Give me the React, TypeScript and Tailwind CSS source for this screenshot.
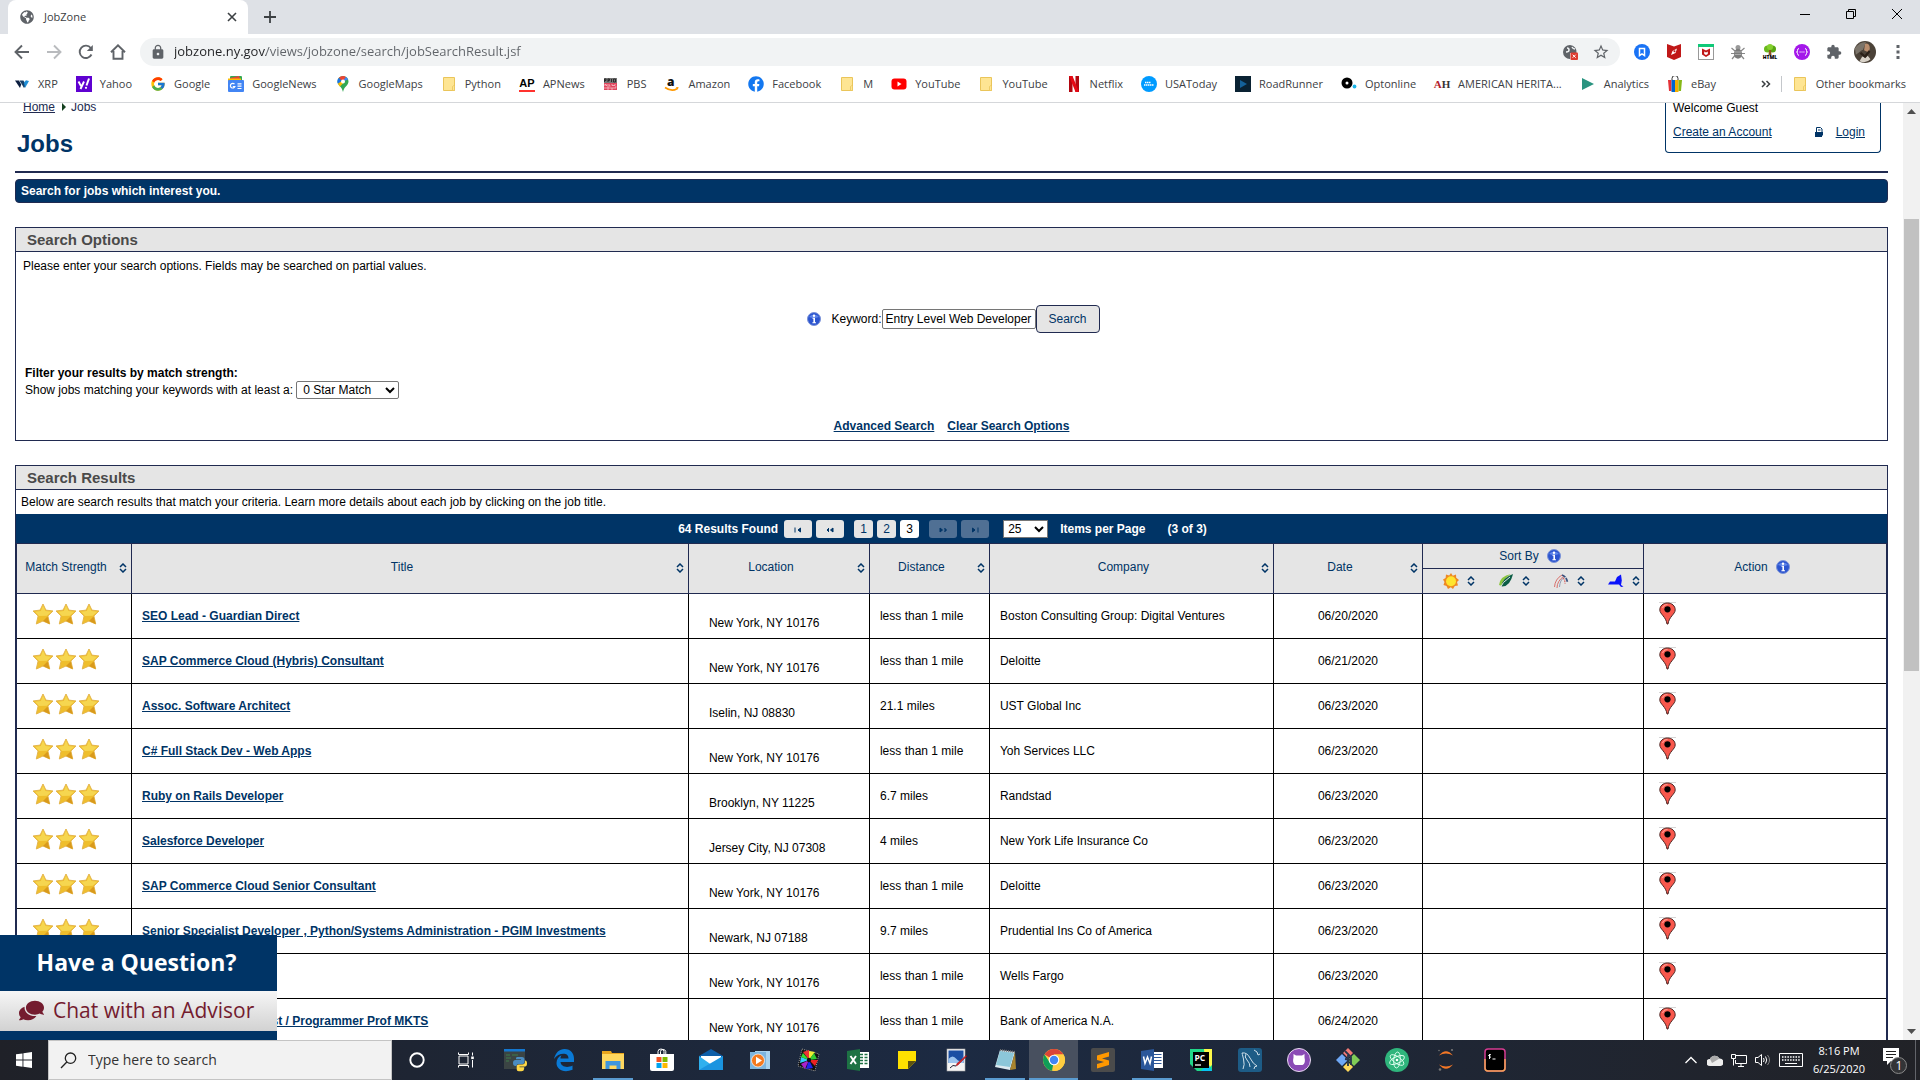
import React from "react";
import { FcGoogle } from "react-icons/fc";
import { FaComments, FaFacebook, FaGlobeAmericas } from "react-icons/fa";
import { MdExtension, MdLock, MdStarBorder } from "react-icons/md";

/* ---------- bookmark icons ---------- */
const Svg = ({ children, box = "0 0 16 16", className = "size-4" }: { children: React.ReactNode; box?: string; className?: string }) => (
  <svg viewBox={box} className={className + " shrink-0"} aria-hidden="true">
    {children}
  </svg>
);
const Folder = () => (
  <Svg>
    <path d="M2.500 1.500h11v13h-11z" fill="#fee593" stroke="#eac55a" />
    <path d="M11.500 14.500v-4q1-1.500 2 0v4z" fill="#fee593" stroke="#eac55a" strokeWidth=".8" />
  </Svg>
);
const Xrp = () => (
  <Svg>
    <path d="M1 4.500h4l2.200 4L6 12z" fill="#0b1d3f" />
    <path d="M5.500 4.500h4L12 9l-2 3z" fill="#16406b" />
    <path d="M10 6.500l2-2.200L15 5l-4 7z" fill="#1f8fd6" />
  </Svg>
);
const Yahoo = () => (
  <Svg>
    <rect width="16" height="16" fill="#5f01d1" />
    <path d="M2.500 5.500l2.500 4.500M8 5.500L4.500 13" stroke="#fff" strokeWidth="1.900" />
    <path d="M10.500 9.500L13 2.500" stroke="#fff" strokeWidth="2" />
    <circle cx="10" cy="11.800" r="1.100" fill="#fff" />
  </Svg>
);
const News = () => (
  <Svg>
    <rect x="2" y="0" width="12" height="6" rx="1" fill="#34a853" />
    <path d="M2 2l9-2 2 5H3z" fill="#ea4335" />
    <path d="M0 2.500h13V6H0z" fill="#fbbc04" />
    <rect y="4" width="16" height="12" rx="1" fill="#4285f4" />
    <path d="M6.500 8.200a2.300 2.300 0 1 0 .4 2.300H4.800M9.500 7.800h4M9.500 10.200h4M9.500 12.500h4" stroke="#fff" strokeWidth="1.200" fill="none" />
  </Svg>
);
const Maps = () => (
  <Svg>
    <path d="M8 0a5.500 5.500 0 0 0-5.500 5.500C2.500 9.500 7 10.500 8 16c1-5.500 5.500-6.500 5.500-10.500A5.500 5.500 0 0 0 8 0z" fill="#34a853" />
    <path d="M8 0a5.500 5.500 0 0 0-4.300 2L8 5.500 11 1a5.500 5.500 0 0 0-3-1z" fill="#ea4335" />
    <path d="M3.700 2a5.500 5.500 0 0 0-.8 5.800L8 5.500z" fill="#1a73e8" />
    <path d="M2.900 7.800L4.800 10.500 10 5.500 8 4z" fill="#fbbc04" />
    <path d="M11 1L7 6l6-2.500A5.500 5.500 0 0 0 11 1z" fill="#4285f4" />
    <circle cx="8" cy="5.500" r="2" fill="#fff" />
  </Svg>
);
const Ap = () => (
  <span className="flex size-4 shrink-0 flex-col items-center justify-end border-b-2 border-[#ff322e] font-['Liberation_Sans'] text-[11px] leading-[13px] font-bold text-black">AP</span>
);
const Pbs = () => (
  <Svg>
    <rect x="1" y="2" width="13" height="5" fill="#777" />
    <rect x="1" y="7" width="13" height="7" fill="#e0445c" />
    <path d="M1.500 6V3h1.500v1.500H1.500M5 6V3h1.500v1.500H5M8.500 3v3M10.500 6V3h2v3z" stroke="#222" strokeWidth=".9" fill="none" />
    <path d="M2 10V8l2 2V8M6 8v2h1.500M9 8v1.500h3V8M2 13v-2M4 11h2v2H4zM8 11v2h2v-2M12 13v-2h1.500" stroke="#f9c5cc" strokeWidth=".8" fill="none" />
  </Svg>
);
const Amazon = () => (
  <Svg>
    <text x="3" y="10" fontFamily="Open Sans" fontWeight="800" fontSize="12" fill="#111">a</text>
    <path d="M1 11.500q6.500 4.500 12 1.200" stroke="#f90" strokeWidth="1.600" fill="none" />
    <path d="M11.800 11.300l2.800-.2-.8 2.700z" fill="#f90" />
  </Svg>
);
const YouTube = () => (
  <Svg>
    <rect x=".5" y="2.500" width="15" height="11" rx="3" fill="#f00" />
    <path d="M6.500 5.500v5l4-2.500z" fill="#fff" />
  </Svg>
);
const Netflix = () => (
  <Svg>
    <path d="M3 0h3.500v16H3zM9.500 0H13v16H9.500z" fill="#b1060f" />
    <path d="M3 0h3.500L13 16H9.500z" fill="#e50914" />
  </Svg>
);
const UsaToday = () => (
  <Svg>
    <circle cx="8" cy="8" r="8" fill="#009bff" />
    <path d="M4 6.500h6M3 9h10" stroke="#fff" strokeWidth="1.500" strokeDasharray="1.500 .5" />
  </Svg>
);
const RoadRunner = () => (
  <Svg>
    <rect width="16" height="16" fill="#0a2233" />
    <path d="M5 4l7 4-7 4z" fill="#14619a" />
  </Svg>
);
const Optonline = () => (
  <Svg>
    <circle cx="6" cy="7" r="3.500" fill="none" stroke="#000" strokeWidth="4" />
    <circle cx="13.500" cy="10.500" r="1.900" fill="#1bb4e8" />
  </Svg>
);
const Heritage = () => (
  <span className="flex w-4 shrink-0 justify-center font-['Liberation_Serif'] text-[11px] font-bold text-[#333]">
    <span className="text-[#b3202b]">A</span>H
  </span>
);
const Analytics = () => (
  <Svg>
    <path d="M2 2l12 6-12 6z" fill="#2a9480" />
  </Svg>
);
const Ebay = () => (
  <Svg>
    <path d="M5 4V2.500a3 3 0 0 1 6 0V4" fill="none" stroke="#333" />
    <path d="M1 4h3.500v11H2z" fill="#e53238" />
    <path d="M4.500 4H8v12H4.500z" fill="#0064d2" />
    <path d="M8 4h3.500v12H8z" fill="#f5af02" />
    <path d="M11.500 4H15l-1 11h-2.500z" fill="#86b817" />
  </Svg>
);

const bookmarks: { label: string; icon: React.ReactNode }[] = [
  { label: "XRP", icon: <Xrp /> },
  { label: "Yahoo", icon: <Yahoo /> },
  { label: "Google", icon: <FcGoogle className="size-4 shrink-0" /> },
  { label: "GoogleNews", icon: <News /> },
  { label: "GoogleMaps", icon: <Maps /> },
  { label: "Python", icon: <Folder /> },
  { label: "APNews", icon: <Ap /> },
  { label: "PBS", icon: <Pbs /> },
  { label: "Amazon", icon: <Amazon /> },
  { label: "Facebook", icon: <FaFacebook className="size-4 shrink-0 text-[#1478f0]" /> },
  { label: "M", icon: <Folder /> },
  { label: "YouTube", icon: <YouTube /> },
  { label: "YouTube", icon: <Folder /> },
  { label: "Netflix", icon: <Netflix /> },
  { label: "USAToday", icon: <UsaToday /> },
  { label: "RoadRunner", icon: <RoadRunner /> },
  { label: "Optonline", icon: <Optonline /> },
  { label: "AMERICAN HERITA...", icon: <Heritage /> },
  { label: "Analytics", icon: <Analytics /> },
  { label: "eBay", icon: <Ebay /> },
];

/* ---------- toolbar extensions ---------- */
const extensions: { label: string; icon: React.ReactNode }[] = [
  {
    label: "Bookmark manager",
    icon: (
      <Svg>
        <circle cx="8" cy="8" r="8" fill="#1a73f5" />
        <path d="M5.500 4.500h5v7L8 9.800l-2.500 1.700z" fill="none" stroke="#fff" strokeWidth="1.500" />
      </Svg>
    ),
  },
  {
    label: "Web boost",
    icon: (
      <Svg>
        <path d="M1 0l7 2.500L15 0v13l-7 3-7-3z" fill="#c01818" />
        <path d="M5 11l1.500-4L11 4.500 9.500 9z" fill="#fff" />
        <circle cx="8.500" cy="7.200" r="1" fill="#c01818" />
      </Svg>
    ),
  },
  {
    label: "Web advisor",
    icon: (
      <Svg>
        <rect x=".5" y=".5" width="15" height="15" fill="#fff" stroke="#999" />
        <path d="M0 0h16v3H0z" fill="#0fc978" />
        <path d="M4 4.500l4 2 4-2v6L8 13l-4-2.500z" fill="#c01818" />
        <path d="M6.200 7.500L8 8.500l1.800-1v2.500L8 11l-1.800-1z" fill="#fff" />
      </Svg>
    ),
  },
  {
    label: "Bug reporter",
    icon: (
      <Svg>
        <path d="M1.500 4l3.500 3M14.500 4L11 7M1 9.500h4M15 9.500h-4M2 15l3-3.500M14 15l-3-3.500" stroke="#888" fill="none" strokeWidth="1.200" />
        <circle cx="8" cy="3.500" r="2.500" fill="#999" />
        <ellipse cx="8" cy="9.800" rx="4" ry="5" fill="#7c7c7c" />
        <path d="M5 8h6M5 10.500h6" stroke="#bbb" strokeWidth=".8" />
      </Svg>
    ),
  },
  {
    label: "HTML tree",
    icon: (
      <Svg>
        <circle cx="5.500" cy="5" r="3.500" fill="#6ab81c" />
        <circle cx="10.500" cy="5" r="3.500" fill="#57a512" />
        <circle cx="8" cy="3" r="3" fill="#84d02e" />
        <path d="M7 6h2l.5 5h-3z" fill="#8a5522" />
        <text x="8" y="15" textAnchor="middle" fontFamily="Open Sans" fontWeight="800" fontSize="5" fill="#000">HTML</text>
      </Svg>
    ),
  },
  {
    label: "Formatter",
    icon: (
      <Svg>
        <circle cx="8" cy="8" r="8" fill="#a417ea" />
        <path d="M5 4.500q-1.500 0-1.500 2T2.500 8q1 0 1 1.500t1.500 2M11 4.500q1.500 0 1.500 2T13.500 8q-1 0-1 1.500t-1.500 2" stroke="#fff" fill="none" />
        <path d="M5.500 8h5" stroke="#fff" strokeDasharray="1.200 .7" strokeWidth="1.200" />
      </Svg>
    ),
  },
  { label: "Extensions", icon: <MdExtension className="size-4 shrink-0 text-[#5f6368]" /> },
];

/* ---------- page icons ---------- */
const Info = () => (
  <Svg box="0 0 14 14" className="size-3.5">
    <circle cx="7" cy="7" r="6.500" fill="#2c55cf" stroke="#7b93d8" />
    <path d="M2 5a5.500 4 0 0 1 10 0q-5 2-10 0z" fill="#5f86ea" />
    <circle cx="7" cy="3.700" r="1.200" fill="#fff" />
    <path d="M5.500 5.800h2.500v4.500h1v1H5.400v-1h1V6.800h-.9z" fill="#fff" />
  </Svg>
);
const SortArrows = () => (
  <Svg box="0 0 8 10" className="h-2.5 w-2">
    <path d="M1 4l3-3 3 3M1 6l3 3 3-3" fill="none" stroke="#003466" strokeWidth="1.500" />
  </Svg>
);
const Star = () => (
  <Svg box="0 0 22 22" className="size-[22px]">
    <path d="M11 1l2.900 6.100 7.100.9-5.100 5 1.800 8L11 18l-6.700 3 1.800-8L1 8l7.100-.9z" fill="#efbe2c" stroke="#e5b64d" strokeLinejoin="round" />
    <path d="M11 2.500l2.500 5.600 6 .6-4.700 4L7 13 3 8.700l5.800-.6z" fill="#f6d650" />
    <path d="M11 18l4.500-4.500 2.200 7.500z" fill="#d99a1c" />
  </Svg>
);
const Pin = () => (
  <Svg box="0 0 17 23" className="h-[23px] w-[17px]">
    <path d="M0 .5h17" stroke="#ccc" strokeWidth=".8" />
    <path d="M8.500 1C4 1 .800 4 .800 7.800c0 4.500 6.200 6.700 7.200 14.200h1c1-7.500 7.200-9.700 7.200-14.200C16.200 4 13 1 8.500 1z" fill="#f8574c" stroke="#4a2320" />
    <path d="M3.500 6q1.500-3.500 5-3.500" stroke="#ff9d94" strokeWidth="1.200" fill="none" />
    <circle cx="8.500" cy="7.300" r="3.100" fill="#000" />
  </Svg>
);
const Sun = () => (
  <Svg>
    <path d="M8 0l1.800 2.700L13 1.500l.2 3.300L16 7l-2 2 1 3.500-3.200.5L10 16l-2.200-1.800L5 16l-1.500-3L.500 12 1.500 9 0 6.500 2.600 5 3 1.500l3.200 1z" fill="#ee8a22" />
    <circle cx="8" cy="8.200" r="5" fill="#ffe52e" />
  </Svg>
);
const Leaf = () => (
  <Svg>
    <path d="M1 12Q2 3 13 1 6 5 4 13z" fill="#8cc63f" />
    <path d="M15 1Q4 5 3.500 13.500 12 14 15 1z" fill="#0b5c45" />
    <path d="M1.500 16Q4 9 12 4" stroke="#e5e5e5" fill="none" />
  </Svg>
);
const Wings = () => (
  <Svg>
    <path d="M1.500 14Q2 6 9 2M4 15Q4 8 11 3" stroke="#d8706c" fill="none" />
    <path d="M6.500 14Q7 7 11 4.500" stroke="#8e9cb4" fill="none" />
    <path d="M9 2q4 1 5.500 7" stroke="#35517f" fill="none" strokeWidth="1.700" strokeDasharray="4 1" />
    <path d="M10 5q2 1 2 6" stroke="#d8605c" fill="none" strokeWidth="1.200" strokeDasharray="2 1" />
  </Svg>
);
const NewYork = () => (
  <Svg>
    <path d="M0 11.500L2 8.500h5L9 4l4-2.500.8 6L13 12l2.500 1.500-2.500.5-2-2.500z" fill="#0a12fb" />
  </Svg>
);

/* ---------- results ---------- */
type Job = { title: string; location: string; distance: string; company: string; date: string };
const jobs: Job[] = [
  { title: "SEO Lead - Guardian Direct", location: "New York, NY 10176", distance: "less than 1 mile", company: "Boston Consulting Group: Digital Ventures", date: "06/20/2020" },
  { title: "SAP Commerce Cloud (Hybris) Consultant", location: "New York, NY 10176", distance: "less than 1 mile", company: "Deloitte", date: "06/21/2020" },
  { title: "Assoc. Software Architect", location: "Iselin, NJ 08830", distance: "21.1 miles", company: "UST Global Inc", date: "06/23/2020" },
  { title: "C# Full Stack Dev - Web Apps", location: "New York, NY 10176", distance: "less than 1 mile", company: "Yoh Services LLC", date: "06/23/2020" },
  { title: "Ruby on Rails Developer", location: "Brooklyn, NY 11225", distance: "6.7 miles", company: "Randstad", date: "06/23/2020" },
  { title: "Salesforce Developer", location: "Jersey City, NJ 07308", distance: "4 miles", company: "New York Life Insurance Co", date: "06/23/2020" },
  { title: "SAP Commerce Cloud Senior Consultant", location: "New York, NY 10176", distance: "less than 1 mile", company: "Deloitte", date: "06/23/2020" },
  { title: "Senior Specialist Developer , Python/Systems Administration - PGIM Investments", location: "Newark, NJ 07188", distance: "9.7 miles", company: "Prudential Ins Co of America", date: "06/23/2020" },
  { title: "Web Developer", location: "New York, NY 10176", distance: "less than 1 mile", company: "Wells Fargo", date: "06/23/2020" },
  { title: "Quantitative Fin. Analyst / Programmer Prof MKTS", location: "New York, NY 10176", distance: "less than 1 mile", company: "Bank of America N.A.", date: "06/24/2020" },
];

const SortHeader = ({ children }: { children: React.ReactNode }) => (
  <th rowSpan={2} scope="col" className="border-r border-b border-[#202a50] bg-[#e5e5e5] p-0 font-normal text-[#003466]">
    <div className="flex items-center pr-1 pb-1">
      <span className="grow text-center">{children}</span>
      <button aria-label={"Sort by " + children} className="pt-0.5 pl-1"><SortArrows /></button>
    </div>
  </th>
);
const SortIcon = ({ label, children }: { label: string; children: React.ReactNode }) => (
  <th scope="col" className="h-[25px] border-b border-[#202a50] bg-[#e5e5e5] p-0 last:border-r">
    <div className="flex items-center justify-end gap-2 pr-[3px]">
      {children}
      <button aria-label={"Sort by " + label}><SortArrows /></button>
    </div>
  </th>
);
const NavButton = ({ label, d, disabled }: { label: string; d: string; disabled?: boolean }) => (
  <button
    aria-label={label}
    disabled={disabled}
    className={
      disabled
        ? "flex h-[18px] w-7 items-center justify-center rounded-[3px] bg-[#507094]"
        : "flex h-[18px] w-7 items-center justify-center rounded-[3px] bg-[#e5e5e5]"
    }
  >
    <Svg box="0 0 12 8" className="mt-0.5 h-2 w-3">
      <path d={d} fill="#003466" stroke="#003466" />
    </Svg>
  </button>
);

/* ---------- task bar icons ---------- */
const T = ({ children }: { children: React.ReactNode }) => <Svg box="0 0 24 24" className="size-6">{children}</Svg>;
const apps: { label: string; icon: React.ReactNode; state?: "open" | "active" }[] = [
  { label: "Cortana", icon: <T><circle cx="12" cy="12" r="6.700" fill="none" stroke="#fff" strokeWidth="1.900" /></T> },
  { label: "Task View", icon: <T><path d="M5 8h9v8H5zM4.500 4.500v2h10v-2M4.500 19.500v-2h10v2M18.500 4.500v3M18.500 12v7.500" fill="none" stroke="#fff" /><rect x="17.200" y="8.500" width="2.600" height="2.600" fill="#fff" /></T> },
  { label: "Python console", icon: <T><rect x="1" y="1" width="21" height="20" fill="#3b4444" /><path d="M1 1h21v2.500H1z" fill="#1477d0" /><path d="M3 7h4M9 7h6M3 10h5M3 13h3" stroke="#3f7c4a" /><path d="M14 9h5q2.500 0 2.500 2.500v2.500q0 2-2 2h-4q-2 0-2 2h-1q-2.500 0-2.500-3t2.500-3h5.500v-.8H13V10.500Q13 9 14 9z" fill="#4a8cc2" /><path d="M22 12.500q2 0 2 3t-2 3h-5.500v.7H21v2q0 2-2.500 2h-2.800q-2 0-2-2v-3q0-1.800 2-1.800h3.800q2 0 2.500-2z" fill="#ffd847" /></T> },
  { label: "Edge", icon: <T><path d="M2 11C3.500 4.500 7.500 1 12.500 1 19 1 22 6 22 10.500V14H8.500c.3 4.500 6.500 6.500 12 3.500v4.300C11 25.500 4.500 21 4.500 15c0-3.700 2-6.300 5-7.800C8.700 8.500 8.500 9.500 8.500 10.500h8C16.500 3.500 6 5 2 11z" fill="#0a7ad6" /></T> },
  { label: "File Explorer", state: "open", icon: <T><path d="M1 3h9l1 2h12v16H1z" fill="#e9a51d" /><path d="M1 6h22v15H1z" fill="#ffd75e" /><path d="M4.500 21v-8h15v8h-4v-3.500h-7V21z" fill="#3f96dd" /></T> },
  { label: "Store", icon: <T><path d="M8 6V3.500q0-2.500 3-2.500t3 2.500V6M10.500 6V3.500q0-2 2.500-2t2.800 2V6" fill="none" stroke="#fff" /><path d="M0 6h24v15q0 2-2 2H2q-2 0-2-2z" fill="#fff" /><path d="M6.500 9h5v5h-5z" fill="#f25022" /><path d="M12.500 9h5v5h-5z" fill="#7fba00" /><path d="M6.500 15h5v5h-5z" fill="#00a4ef" /><path d="M12.500 15h5v5h-5z" fill="#ffb900" /></T> },
  { label: "Mail", icon: <T><path d="M0 8l12-7 12 7v14H0z" fill="#0d5ea8" /><path d="M2 8h20v8H2z" fill="#fff" /><path d="M0 8l12 8.500L24 8v14H0z" fill="#2fb0ee" /><path d="M0 22L24 8v14z" fill="#1a94e0" /></T> },
  { label: "Media Player", icon: <T><rect x="7" y="3" width="15" height="18" fill="#a9d3ee" /><rect x="2" y="4" width="16" height="17" fill="#7cb5de" /><circle cx="10" cy="12.500" r="6.500" fill="#f47a1f" stroke="#fff" strokeWidth=".7" /><path d="M8 8.800v7.500l6-3.700z" fill="#fff" /></T> },
  { label: "Picasa", icon: <T><path d="M5 1l17 5-4 17L1 18z" fill="#111" stroke="#999" strokeDasharray="1 1" /><path d="M12 12L6 4l6-2z" fill="#e33" /><path d="M12 12V3l6 1z" fill="#ee3" /><path d="M12 12l5-7 3 6z" fill="#3c3" /><path d="M12 12l9 0-3 6z" fill="#e22" /><path d="M12 12l4 8-7 1z" fill="#22e" /><path d="M12 12l-4 9-4-5z" fill="#a2c" /><path d="M12 12L3 15l1-6z" fill="#3cf" /><path d="M12 12L4 9l2-4z" fill="#3d3" /><circle cx="12" cy="12" r="2.200" fill="#111" /></T> },
  { label: "Excel", icon: <T><rect x="12" y="4" width="11" height="16" fill="#fff" /><path d="M14 6.500h3M18.500 6.500h3M14 9.500h3M18.500 9.500h3M14 12.500h3M18.500 12.500h3M14 15.500h3M18.500 15.500h3" stroke="#1f7145" strokeWidth="1.700" /><path d="M1 3l13-2v22L1 21z" fill="#1d7244" /><path d="M4.500 8l5.500 8M10 8l-5.500 8" stroke="#fff" strokeWidth="1.900" /></T> },
  { label: "Sticky Notes", icon: <T><path d="M3 3h18v10l-8 8H3z" fill="#ffe100" /><path d="M13 21v-8h8z" fill="#5d5310" /></T> },
  { label: "Journal", icon: <T><rect x="3" y="1" width="18" height="22" fill="#f4f4f4" stroke="#aaa" strokeWidth=".6" /><path d="M4.500 2.500h15V15h-15z" fill="#1b4fa3" /><path d="M4.500 11q4-5 8 0t7-3v7h-15z" fill="#9bc4ee" /><path d="M23 8l-9 9-2 1 1-2.500 9-8z" fill="#d22" stroke="#701" strokeWidth=".4" /><path d="M6 20q3-4 6-2" stroke="#223" fill="none" /></T> },
  { label: "Notepad", state: "open", icon: <T><path d="M7 2l15 2-5 18L2 19z" fill="#dceaf0" /><path d="M7 3l14 2-4 14-14-2z" fill="#8cc7d9" /><path d="M22 4l1 17-6 1z" fill="#a8842e" /><path d="M7 2l15 2" stroke="#777" strokeWidth="2" strokeDasharray="1 1" /></T> },
  { label: "Chrome", state: "active", icon: <T><circle cx="12" cy="12" r="11" fill="#fc4" /><path d="M12 12L2.500 6.500A11 11 0 0 1 21.500 6.500H12z" fill="#db4437" /><path d="M12 12l-2 10.800A11 11 0 0 1 2.500 6.500L7.500 14z" fill="#0f9d58" /><path d="M16 14l-4.700 9A11 11 0 0 0 21.500 6.500H12z" fill="#ffcd40" /><circle cx="12" cy="12" r="5.300" fill="#fff" /><circle cx="12" cy="12" r="4.200" fill="#4285f4" /></T> },
  { label: "Sublime Text", icon: <T><rect width="24" height="24" rx="2" fill="#4b4b4b" /><path d="M6 7.500l12-3.500v4.500l-7 2 7 2V17L6 20.500V16l7-2-7-2z" fill="#ff9800" /></T> },
  { label: "Word", state: "open", icon: <T><rect x="12" y="4" width="11" height="16" fill="#fff" /><path d="M14 6.500h7.500M14 9.500h7.500M14 12.500h7.500M14 15.500h7.500" stroke="#2b579a" strokeWidth="1.200" /><path d="M1 3l13-2v22L1 21z" fill="#2b579a" /><path d="M3.500 8.500l1.500 7L7.500 9l2.500 6.500 1.500-7" stroke="#fff" strokeWidth="1.500" fill="none" /></T> },
  { label: "PyCharm", icon: <T><path d="M1 1h14l8 6v16H8l-7-7z" fill="#21d789" /><path d="M15 1h8v16l-6 6z" fill="#fcf84a" /><path d="M19 15l4 8H12z" fill="#07c3f2" /><rect x="4" y="4" width="16" height="16" fill="#000" /><text x="5.500" y="13" fontFamily="Open Sans" fontWeight="700" fontSize="8.500" fill="#fff">PC</text><path d="M6 17h6" stroke="#fff" strokeWidth="1.300" /></T> },
  { label: "MySQL Workbench", icon: <T><rect width="24" height="24" rx="3" fill="#1d5c86" /><path d="M5 21Q7 17 5.500 11T4 5q5-1 8 5t7 8q-3 0-3 3M8 6q-2 3 1 6t3 7" stroke="#cfe0ea" fill="none" /><path d="M16 2l3 2 1 3 2-1" stroke="#cfe0ea" fill="none" /></T> },
  { label: "GitHub Desktop", icon: <T><circle cx="12" cy="12" r="11.500" fill="#8a4bb5" stroke="#e8dcf0" /><path d="M6.500 6l2.500 1.500h6L17.500 6v3.500q1.500 6-2 7.500h-7q-3.500-1.500-2-7.500z" fill="#fff" /></T> },
  { label: "Git", icon: <T><path d="M12 0l5 5-5 5-5-5z" fill="#f27a75" /><path d="M6 6l6 6-6 6-6-6z" fill="#6fa8f5" /><path d="M18 6l6 6-6 6-6-6z" fill="#80cc56" /><path d="M12 14l5 5-5 5-5-5z" fill="#ffd95a" /><path d="M9 3l6 6v8M12 7v11M9 11l6 1" stroke="#26364c" strokeWidth="1.800" fill="none" /></T> },
  { label: "Atom", icon: <T><circle cx="12" cy="12" r="12" fill="#2fb57c" /><g fill="none" stroke="#e0fff0" strokeWidth=".9"><ellipse cx="12" cy="12" rx="8" ry="3.300" transform="rotate(35 12 12)" /><ellipse cx="12" cy="12" rx="8" ry="3.300" transform="rotate(95 12 12)" /><ellipse cx="12" cy="12" rx="8" ry="3.300" transform="rotate(155 12 12)" /></g><circle cx="12" cy="12" r="1.300" fill="#fff" /></T> },
  { label: "Jupyter", icon: <T><path d="M5 7.500Q12-1 19 7.500 12 3.500 5 7.500zM5 16.500Q12 25 19 16.500 12 20.500 5 16.500z" fill="#f37726" /><circle cx="18" cy="2" r="1.100" fill="#777" /><circle cx="5" cy="2.500" r=".8" fill="#777" /><circle cx="6" cy="21.500" r="1.300" fill="#777" /></T> },
  { label: "Terminal", icon: <T><rect x="2" y="1" width="20" height="22" rx="3" fill="#000" stroke="#d63c92" strokeWidth="1.500" /><path d="M2 11v9q0 3 3 3h14q3 0 3-3v-9" fill="none" stroke="#f0a452" strokeWidth="1.500" /><path d="M6.500 6v5M8 6.500l-2.500 1 2.500 2M9.500 11h3" stroke="#fff" fill="none" /></T> },
];

export default function App() {
  return (
    <div className="flex h-screen flex-col overflow-hidden bg-white font-['Liberation_Sans',Arial,sans-serif] text-xs text-black">
      {/* browser chrome */}
      <header className="shrink-0 border-b border-[#d5d7da] bg-white font-['Open_Sans',sans-serif] text-[11px] text-[#3c4043]">
        <div className="flex h-[34px] bg-[#dee1e6] pl-2">
          <div className="flex w-60 items-center rounded-t-lg bg-white pr-2.5 pl-3">
            <FaGlobeAmericas className="size-3.5 text-[#5f6368]" />
            <span className="ml-2.5 grow">JobZone</span>
            <button aria-label="Close tab">
              <Svg className="size-3" box="0 0 12 12"><path d="M2 2l8 8M10 2l-8 8" stroke="#3c4043" strokeWidth="1.600" /></Svg>
            </button>
          </div>
          <button aria-label="New tab" className="ml-[15px]">
            <Svg className="size-3.5" box="0 0 14 14"><path d="M7 1v12M1 7h12" stroke="#3c4043" strokeWidth="1.800" /></Svg>
          </button>
          <div className="ml-auto flex h-7 items-center text-black">
            <button aria-label="Minimize" className="flex w-[46px] justify-center"><Svg className="size-2.5" box="0 0 10 10"><path d="M0 5.500h10" stroke="#000" /></Svg></button>
            <button aria-label="Restore" className="flex w-[46px] justify-center"><Svg className="size-2.5" box="0 0 10 10"><path d="M.5 2.500h7v7h-7zM2.500 2.500v-2h7v7h-2" fill="none" stroke="#000" /></Svg></button>
            <button aria-label="Close" className="flex w-[46px] justify-center"><Svg className="size-2.5" box="0 0 10 10"><path d="M0 0l10 10M10 0L0 10" stroke="#000" /></Svg></button>
          </div>
        </div>
        <div className="flex h-8 items-center pt-1 pr-3.5 pl-3.5">
          <div className="flex w-[126px] items-center gap-4">
            <button aria-label="Back"><Svg><path d="M15 8H2M8 1.500L1.500 8 8 14.500" fill="none" stroke="#5f6368" strokeWidth="1.900" /></Svg></button>
            <button aria-label="Forward"><Svg><path d="M1 8h13M8 1.500L14.500 8 8 14.500" fill="none" stroke="#b9bbbe" strokeWidth="1.900" /></Svg></button>
            <button aria-label="Reload"><Svg><path d="M13.500 10.500A6.200 6.200 0 1 1 12.800 4" fill="none" stroke="#5f6368" strokeWidth="1.900" /><path d="M14.800 1v6H8.800z" fill="#5f6368" /></Svg></button>
            <button aria-label="Home"><Svg><path d="M1 8.200L8 1.300l7 6.900M3.500 7v7.800h9V7" fill="none" stroke="#5f6368" strokeWidth="1.900" /></Svg></button>
          </div>
          <div className="flex h-7 grow items-center rounded-full bg-[#f1f3f4] px-2.5">
            <MdLock className="size-4 text-[#5f6368]" />
            <input
              aria-label="Address"
              className="ml-2 grow bg-[linear-gradient(to_right,#202124_92px,#5f6368_92px)] bg-clip-text text-[13px] text-transparent"
              defaultValue="jobzone.ny.gov/views/jobzone/search/jobSearchResult.jsf"
            />
            <Svg>
              <path d="M8 1a7 7 0 1 0 0 14V9h6.500A7 7 0 0 0 8 1z" fill="#5f6368" /><path d="M5 4q2 0 2 2t-3 2M10 3q1 2 3 2" stroke="#f1f3f4" fill="none" strokeWidth="1.500" />
              <rect x="8.500" y="8.500" width="7.500" height="7.500" rx="1" fill="#dd3b30" /><path d="M10.700 10.700l3 3m0-3l-3 3" stroke="#fff" />
            </Svg>
            <button aria-label="Bookmark this page" className="ml-3.5"><MdStarBorder className="size-[18px] text-[#5f6368]" /></button>
          </div>
          <div className="ml-3.5 flex items-center gap-4">
            {extensions.map((e) => (
              <button key={e.label} aria-label={e.label}>{e.icon}</button>
            ))}
          </div>
          <button aria-label="Profile" className="ml-3">
            <Svg box="0 0 24 24" className="size-[22px]">
              <circle cx="12" cy="12" r="12" fill="#4b4238" />
              <path d="M1 8q5-7 12-7l-3 8-8 6z" fill="#7b746a" />
              <path d="M12 3q4-1 5 3t-2 6l-4-2z" fill="#b98d6d" />
              <path d="M6 22l3-5 4 1 2-2 3 4q-5 5-12 2z" fill="#d8d2c8" />
              <path d="M7 13l5 4 5-6" stroke="#2a2018" strokeWidth="2.500" fill="none" />
            </Svg>
          </button>
          <button aria-label="Menu" className="ml-3.5"><Svg><path d="M8 1v3M8 6.500v3M8 12v3" stroke="#5f6368" strokeWidth="3" /></Svg></button>
        </div>
        <nav aria-label="Bookmarks" className="flex h-9 items-center overflow-hidden pr-3.5 pl-3.5">
          <div className="flex items-center gap-[18px]">
            {bookmarks.map((b, i) => (
              <a key={i} href="#" className="flex shrink-0 items-center gap-2 whitespace-nowrap">{b.icon}{b.label}</a>
            ))}
          </div>
          <button aria-label="More bookmarks" className="ml-auto"><Svg className="size-2.5" box="0 0 10 10"><path d="M1 2l3 3-3 3M5.500 2l3 3-3 3" fill="none" stroke="#3c4043" strokeWidth="1.500" /></Svg></button>
          <span className="mx-2.5 h-4 w-px bg-[#c4c7cb]" />
          <a href="#" className="flex shrink-0 items-center gap-2 whitespace-nowrap"><Folder />Other bookmarks</a>
        </nav>
      </header>

      {/* page */}
      <div className="relative flex min-h-0 grow">
        <main className="min-w-0 grow overflow-hidden px-[15px]">
          <div className="flex h-[68px] justify-between">
            <div>
              <nav aria-label="Breadcrumb" className="-mt-1 flex h-4 items-center pl-2 text-[#202a50]">
                <a href="#" className="underline">Home</a>
                <Svg className="ml-1.5 mr-1 h-2 w-1.5" box="0 0 6 8"><path d="M1 0l4 4-4 4z" fill="#14401f" /></Svg>
                <span>Jobs</span>
              </nav>
              <h1 className="mt-[13px] pl-0.5 text-2xl leading-8 font-bold text-[#003466]">Jobs</h1>
            </div>
            <div className="mr-[7px] h-[50px] w-[216px] rounded-b border border-t-0 border-[#003466] px-[7px]">
              <p className="-mt-1 leading-[18px]">Welcome Guest</p>
              <div className="flex h-[30px] items-center text-[#003466]">
                <a href="#" className="grow underline">Create an Account</a>
                <Svg className="mr-3 h-2.5 w-2.5" box="0 0 10 10"><path d="M2.500 5V.500h4L8 2v3" fill="#fff" stroke="#003466" /><path d="M4 3h2.500" stroke="#003466" /><path d="M1 5h8v3.500H8V10H1z" fill="#003466" /></Svg>
                <a href="#" className="mr-2 underline">Login</a>
              </div>
            </div>
          </div>
          <div className="h-0.5 bg-[#202a50]" />
          <p className="mt-1.5 rounded border border-[#202a50] bg-[#003466] px-[5px] leading-[22px] font-bold text-white">Search for jobs which interest you.</p>

          <section className="mt-6 border border-[#202a50]">
            <h2 className="border-b border-[#202a50] bg-[#e5e5e5] pl-[11px] text-[15px] leading-[23px] font-bold text-[#4a4a4a]">Search Options</h2>
            <p className="mt-1.5 pl-[7px] leading-4">Please enter your search options. Fields may be searched on partial values.</p>
            <form className="mt-[31px] flex h-7 items-center justify-center pl-1" onSubmit={(e) => e.preventDefault()}>
              <Info />
              <label htmlFor="keyword" className="ml-2.5">Keyword:</label>
              <input id="keyword" defaultValue="Entry Level Web Developer" className="h-5 w-[154px] rounded-xs border border-[#767676] bg-white px-[3px]" />
              <button className="h-7 w-16 rounded border border-[#202a50] bg-[#e5e5e5] text-[#003466]">Search</button>
            </form>
            <div className="mt-[33px] pl-[9px] leading-[15px]">
              <p className="font-bold">Filter your results by match strength:</p>
              <div className="flex items-center">
                <label htmlFor="strength">Show jobs matching your keywords with at least a:</label>
                <select id="strength" className="ml-[3px] h-[18px] w-[103px] rounded-xs border border-[#767676] bg-white pl-0.5 leading-4">
                  <option>0 Star Match</option>
                  <option>1 Star Match</option>
                  <option>2 Star Match</option>
                </select>
              </div>
            </div>
            <div className="mt-[19px] mb-1.5 flex justify-center gap-[13px] leading-4 font-bold text-[#003466]">
              <a href="#" className="underline">Advanced Search</a>
              <a href="#" className="underline">Clear Search Options</a>
            </div>
          </section>

          <section className="mt-6 border border-[#202a50]">
            <h2 className="border-b border-[#202a50] bg-[#e5e5e5] pl-[11px] text-[15px] leading-[23px] font-bold text-[#4a4a4a]">Search Results</h2>
            <p className="pl-[5px] leading-6">Below are search results that match your criteria. Learn more details about each job by clicking on the job title.</p>
            <div className="flex h-[30px] items-center justify-center border-b border-[#202a50] bg-[#003466] pr-[18px] font-bold text-white">
              <span>64 Results Found</span>
              <div className="ml-1.5 flex gap-1">
                <NavButton label="First page" d="M3 1.500v5M8.500 2v4L6 4z" />
                <NavButton label="Previous page" d="M5 2L3 4l2 2M9 2v4L6.500 4z" />
              </div>
              <div className="ml-2.5 flex gap-1 font-normal">
                <button className="h-[18px] w-[19px] rounded-[3px] bg-[#e5e5e5] text-[#003466]">1</button>
                <button className="h-[18px] w-[19px] rounded-[3px] bg-[#e5e5e5] text-[#003466]">2</button>
                <button aria-current="page" className="h-[18px] w-[19px] rounded-[3px] bg-white text-black">3</button>
              </div>
              <div className="ml-2.5 flex gap-1">
                <NavButton disabled label="Next page" d="M7.500 2l2 2-2 2M3 2v4l2.500-2z" />
                <NavButton disabled label="Last page" d="M9 1.500v5M3.500 2v4L6 4z" />
              </div>
              <select id="perpage" aria-label="Items per Page" defaultValue="25" className="ml-3.5 h-[18px] w-[45px] border border-[#767676] bg-white font-normal text-black">
                <option>10</option>
                <option>25</option>
                <option>50</option>
              </select>
              <label htmlFor="perpage" className="ml-3">Items per Page</label>
              <span className="ml-[22px]">(3 of 3)</span>
            </div>
            <table className="w-full table-fixed border-separate border-spacing-0 border-x border-[#202a50]">
              <colgroup>
                <col className="w-[115px]" />
                <col />
                <col className="w-[181px]" />
                <col className="w-[120px]" />
                <col className="w-[284px]" />
                <col className="w-[149px]" />
                <col className="w-[55px]" />
                <col className="w-[55px]" />
                <col className="w-[55px]" />
                <col className="w-14" />
                <col className="w-[242px]" />
              </colgroup>
              <thead>
                <tr>
                  <SortHeader>Match Strength</SortHeader>
                  <SortHeader>Title</SortHeader>
                  <SortHeader>Location</SortHeader>
                  <SortHeader>Distance</SortHeader>
                  <SortHeader>Company</SortHeader>
                  <SortHeader>Date</SortHeader>
                  <th colSpan={4} scope="colgroup" className="h-[25px] border-r border-b border-[#202a50] bg-[#e5e5e5] p-0 font-normal text-[#003466]">
                    <div className="flex items-center justify-center gap-2 pr-1.5">Sort By <Info /></div>
                  </th>
                  <th rowSpan={2} scope="col" className="border-b border-[#202a50] bg-[#e5e5e5] p-0 font-normal text-[#003466]">
                    <div className="flex items-center justify-center gap-2 pr-1.5 pb-1">Action <Info /></div>
                  </th>
                </tr>
                <tr>
                  <SortIcon label="bright outlook"><Sun /></SortIcon>
                  <SortIcon label="green jobs"><Leaf /></SortIcon>
                  <SortIcon label="veteran jobs"><Wings /></SortIcon>
                  <SortIcon label="state jobs"><NewYork /></SortIcon>
                </tr>
              </thead>
              <tbody>
                {jobs.map((j) => (
                  <tr key={j.title} className="*:h-[45px] *:border-r *:border-b *:border-black *:last:border-r-0">
                    <td className="p-0">
                      <div role="img" aria-label="3 stars" className="-mt-1 flex gap-px pl-[15px]"><Star /><Star /><Star /></div>
                    </td>
                    <td className="px-2.5 py-0"><a href="#" className="font-bold text-[#003466] underline">{j.title}</a></td>
                    <td className="pt-[13px] pb-0 pl-5">{j.location}</td>
                    <td className="py-0 pl-2.5">{j.distance}</td>
                    <td className="py-0 pl-2.5">{j.company}</td>
                    <td className="p-0 text-center">{j.date}</td>
                    <td colSpan={4} className="p-0" />
                    <td className="py-0 pl-[15px]"><button aria-label={"Map of " + j.location} className="-mt-1.5 block"><Pin /></button></td>
                  </tr>
                ))}
              </tbody>
            </table>
          </section>
        </main>
        <div className="flex w-[17px] shrink-0 flex-col items-center bg-[#f1f1f1]">
          <Svg className="my-1.5 h-[5px] w-[9px]" box="0 0 9 5"><path d="M0 5l4.500-5L9 5z" fill="#505050" /></Svg>
          <div className="flex-[11]" />
          <div className="w-[15px] flex-[50] bg-[#c1c1c1]" />
          <div className="flex-[39]" />
          <Svg className="my-1.5 h-[5px] w-[9px]" box="0 0 9 5"><path d="M0 0l4.500 5L9 0z" fill="#505050" /></Svg>
        </div>
        <aside className="absolute bottom-0 left-0 w-[277px] bg-[#003466] pb-[9px] font-['Open_Sans',sans-serif]">
          <p className="pr-1 pb-0.5 text-center text-[23px] leading-[54px] font-bold text-white">Have a Question?</p>
          <a href="#" className="flex h-10 items-center bg-linear-to-b from-[#f6f6f6] to-[#d2d2d2] pb-0.5 pl-[19px] text-[21px] text-[#741c2f]">
            <FaComments className="mr-[9px] size-[25px] shrink-0 -scale-x-100" />
            Chat with an Advisor
          </a>
        </aside>
      </div>

      {/* task bar */}
      <footer className="flex h-10 shrink-0 items-center bg-linear-to-r from-[#1f2128] via-[#1c2a42] to-[#212227] font-['Open_Sans',sans-serif] text-[11px] text-white">
        <button aria-label="Start" className="flex w-12 shrink-0 justify-center">
          <Svg><path d="M0 2.300L6.500 1.400V7.600H0zM7.400 1.300L16 0v7.600H7.400zM0 8.500h6.500v6.200L0 13.800zM7.400 8.500H16V16l-8.600-1.200z" fill="#fff" /></Svg>
        </button>
        <div className="flex h-10 w-[344px] shrink-0 items-center border border-[#c4c4c4] bg-[#f2f2f2] pl-[11px]">
          <Svg className="size-[17px]" box="0 0 17 17"><circle cx="10.500" cy="6.200" r="5.200" fill="none" stroke="#222" strokeWidth="1.300" /><path d="M6.800 10L1 16" stroke="#222" strokeWidth="1.300" /></Svg>
          <input aria-label="Search Windows" placeholder="Type here to search" className="ml-[11px] grow text-[14px] text-[#333] placeholder:text-[#333]" />
        </div>
        <div className="flex h-10">
          {apps.map((a) => (
            <button
              key={a.label}
              aria-label={a.label}
              className={
                a.state === "active"
                  ? "flex w-[49px] items-center justify-center border-b-2 border-[#5a9bd0] bg-[#48505f] pt-0.5"
                  : "flex w-[49px] items-center justify-center"
              }
            >
              {a.state === "open" ? <span className="flex h-10 w-10 items-center justify-center border-b-2 border-[#5a9bd0] pt-0.5">{a.icon}</span> : a.icon}
            </button>
          ))}
        </div>
        <div className="ml-auto flex h-10 items-center gap-2">
          <Svg><path d="M2.500 11L8 5.500l5.500 5.500" stroke="#fff" fill="none" strokeWidth="1.300" /></Svg>
          <Svg><path d="M3 14a3.500 3.500 0 0 1 0-7A5.300 5.300 0 0 1 12.500 6.500 3.800 3.800 0 0 1 13.500 14z" fill="#eee" /><path d="M3 7A5.300 5.300 0 0 1 12.500 6.500L5 11z" fill="#aaa" /></Svg>
          <Svg><path d="M4.500 3.500h11v8h-11V8M10 11.500v3M7 14.500h6M.5 2.500h4v4h-4zM2.500 6.500v7" fill="none" stroke="#fff" /></Svg>
          <Svg><path d="M.5 5.500H3l3.500-3v11l-3.500-3H.500z" fill="none" stroke="#fff" /><path d="M8.500 6q1.300 2 0 4M10.500 4.500q2.500 3.500 0 7" fill="none" stroke="#fff" /><path d="M12.500 3q4 5 0 10" fill="none" stroke="#888" /></Svg>
          <Svg box="0 0 24 14" className="h-3.5 w-6"><path d="M.5.500h23v13H.500z" fill="none" stroke="#fff" /><path d="M3 4h18M3 7h18" stroke="#fff" strokeDasharray="1.500 1.200" strokeWidth="1.500" /><path d="M6 10.500h12" stroke="#fff" /></Svg>
          <div className="w-14 text-center leading-[18px]">8:16 PM<br />6/25/2020</div>
          <button aria-label="Notifications" className="ml-1.5 flex">
            <Svg box="0 0 26 30" className="h-[30px] w-[26px]">
              <path d="M2 3h16v13h-8l-4 4v-4H2z" fill="#fff" /><path d="M5 6.500h10M5 9.500h10M5 12.500h7" stroke="#222" strokeWidth="1.200" />
              <circle cx="17.500" cy="20.500" r="8" fill="#333437" stroke="#8a8a8a" /><text x="14.500" y="24.500" fontFamily="Open Sans" fontSize="12" fill="#fff">1</text>
            </Svg>
          </button>
          <span className="mr-1 h-10 w-px bg-[#62646a]" />
        </div>
      </footer>
    </div>
  );
}
